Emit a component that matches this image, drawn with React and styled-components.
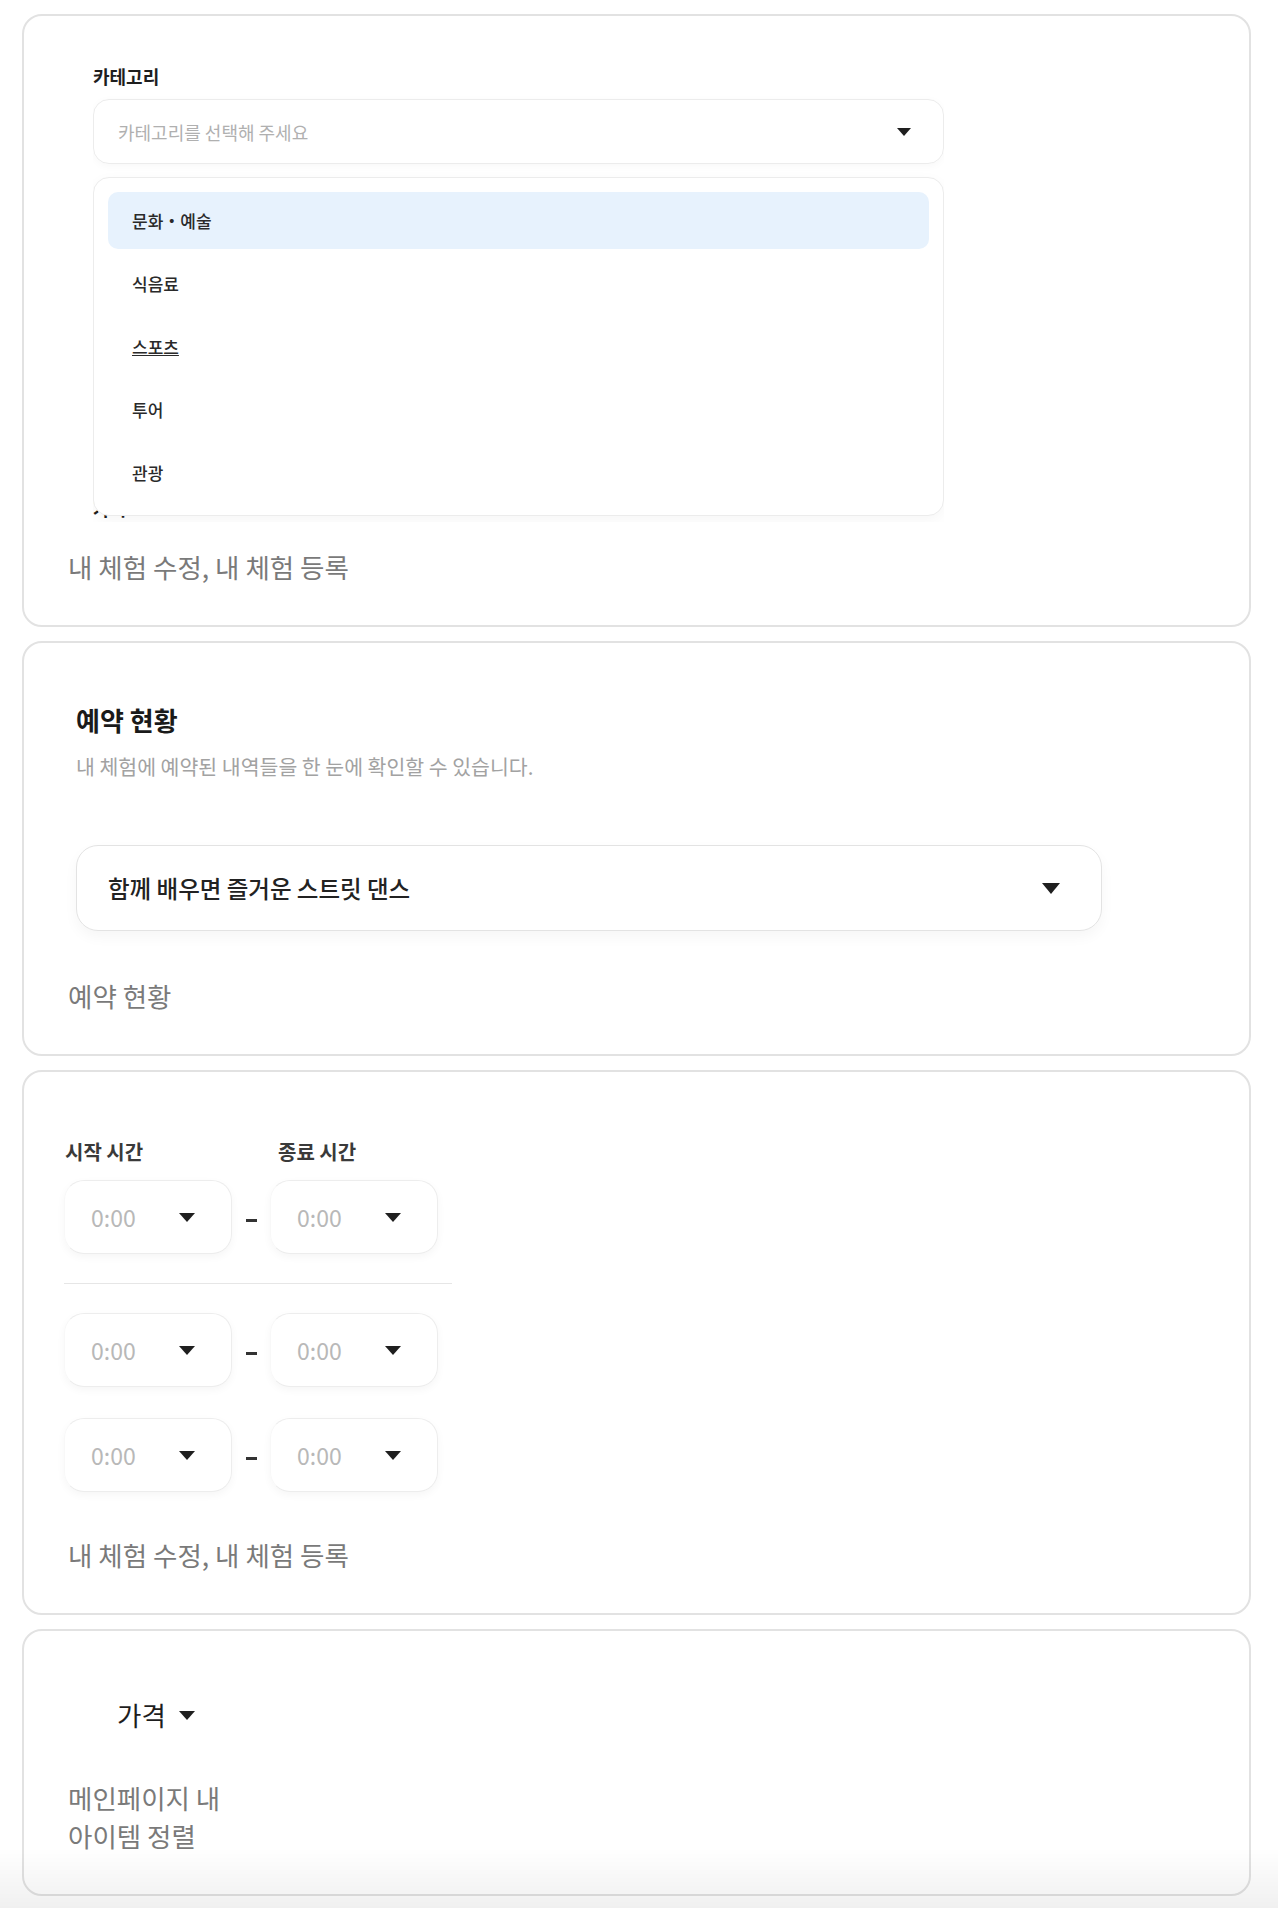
import styled, { createGlobalStyle } from "styled-components";

const GlobalStyle = createGlobalStyle`
    * {
        box-sizing: border-box;
    }

    body {
        margin: 0;
        background-color: #ffffff;
        font-family: "Noto Sans CJK KR", "Noto Sans", sans-serif;
        color: #222222;
    }
`;

const Page = styled.main`
    display: flex;
    flex-direction: column;
    gap: 14px;
    padding: 14px 27px 12px 22px;
`;

const Card = styled.section`
    display: flex;
    flex-direction: column;
    align-items: flex-start;
    padding: ${props => props.$top}px 44px 39px 44px;
    border: 2px solid #e2e2e2;
    border-radius: 20px;
    background-color: #ffffff;
`;

const Caption = styled.p`
    margin: ${props => props.$gap}px 0 0 0;
    font-size: 26.5px;
    line-height: 38px;
    color: #7a7a7a;
`;

const BottomFade = styled.div`
    position: fixed;
    left: 0;
    right: 0;
    bottom: 0;
    height: 60px;
    pointer-events: none;
    background: linear-gradient(to bottom, rgba(0, 0, 0, 0), rgba(0, 0, 0, 0.06));
`;

function Caret({ width = 14, height = 8, color = "#1f1f1f" }) {
    return (
        <svg width={width} height={height} viewBox="0 0 14 8" preserveAspectRatio="none">
            <polygon points="0,0 14,0 7,8" fill={color} />
        </svg>
    );
}

/* ---------- category form ---------- */

const FormFrame = styled.div`
    position: relative;
    width: 851px;
    height: 460px;
    margin-left: 25px;
    padding-top: 2px;
    overflow: hidden;
`;

const FieldLabel = styled.div`
    font-size: 18px;
    font-weight: 700;
    line-height: 24px;
    color: #1e1e1e;
    margin-top: ${props => props.$gap || 0}px;
`;

const CategorySelect = styled.div`
    display: flex;
    align-items: center;
    justify-content: space-between;
    height: 65px;
    margin-top: 11px;
    padding: 0 32px 0 24px;
    border: 1px solid #ececec;
    border-radius: 16px;
    box-shadow: 0 2px 8px rgba(0, 0, 0, 0.03);
    font-size: 18px;
    color: #b0b0b0;
`;

const TextArea = styled.div`
    height: 252px;
    margin-top: 12px;
    border: 1px solid #ececec;
    border-radius: 16px;
`;

const Menu = styled.ul`
    position: absolute;
    top: 115px;
    left: 0;
    right: 0;
    display: flex;
    flex-direction: column;
    gap: 6px;
    margin: 0;
    padding: 14px 14px;
    list-style: none;
    background-color: #ffffff;
    border: 1px solid #ececec;
    border-radius: 16px;
    box-shadow: 0 4px 14px rgba(0, 0, 0, 0.04);
`;

const MenuItem = styled.li`
    display: flex;
    align-items: center;
    height: 57px;
    padding-left: 24px;
    border-radius: 10px;
    font-size: 17px;
    font-weight: 500;
    color: #2a2a2a;
    background-color: ${props => (props.$active ? "#e7f2fd" : "transparent")};
    text-decoration: ${props => (props.$hover ? "underline" : "none")};
`;

const categories = ["문화・예술", "식음료", "스포츠", "투어", "관광"];

/* ---------- reservation status ---------- */

const StatusBlock = styled.div`
    display: flex;
    flex-direction: column;
    padding-left: 8px;
`;

const Heading = styled.h2`
    margin: 0;
    font-size: 26px;
    font-weight: 700;
    line-height: 32px;
    color: #1a1a1a;
`;

const SubText = styled.p`
    margin: 17px 0 0 0;
    font-size: 20.5px;
    line-height: 26px;
    color: #a2a2a2;
`;

const ExperienceSelect = styled.div`
    display: flex;
    align-items: center;
    justify-content: space-between;
    width: 1026px;
    height: 86px;
    margin-top: 66px;
    padding: 0 41px 0 31px;
    border: 1px solid #e3e3e3;
    border-radius: 22px;
    box-shadow: 0 6px 14px rgba(0, 0, 0, 0.04);
    font-size: 23.5px;
    font-weight: 500;
    color: #222222;
`;

/* ---------- time slots ---------- */

const TimeArea = styled.div`
    display: flex;
    flex-direction: column;
    margin-left: -4px;
    width: 388px;
`;

const TimeGrid = styled.div`
    display: grid;
    grid-template-columns: 168px 38px 168px;
    align-items: center;
    margin-top: ${props => props.$gap || 0}px;
`;

const TimeLabel = styled.div`
    grid-column: ${props => props.$col};
    padding-left: ${props => props.$indent}px;
    font-size: 20px;
    font-weight: 700;
    line-height: 24px;
    color: #3a3a3a;
`;

const TimeBox = styled.div`
    display: flex;
    align-items: center;
    justify-content: space-between;
    height: 74px;
    padding: 0 36px 0 26px;
    border: 1px solid #ededed;
    border-left-color: #f8f8f8;
    border-radius: 20px;
    box-shadow: 0 3px 8px rgba(0, 0, 0, 0.04);
    font-size: 23px;
    color: #b8b8b8;
`;

const Dash = styled.span`
    justify-self: center;
    width: 11px;
    height: 3px;
    margin-top: 6px;
    background-color: #333333;
`;

const Divider = styled.hr`
    width: 100%;
    margin: 29px 0 0 0;
    border: none;
    border-top: 1px solid #e6e6e6;
`;

function TimeRow({ gap }) {
    return (
        <TimeGrid $gap={gap}>
            <TimeBox>
                <span>0:00</span>
                <Caret width={16} height={9} />
            </TimeBox>
            <Dash />
            <TimeBox>
                <span>0:00</span>
                <Caret width={16} height={9} />
            </TimeBox>
        </TimeGrid>
    );
}

/* ---------- sort ---------- */

const SortButton = styled.div`
    display: flex;
    align-items: center;
    gap: 13px;
    margin-left: 49px;
    font-size: 26.5px;
    line-height: 32px;
    color: #1e1e1e;
`;

export default function App() {
    return (
        <>
            <GlobalStyle />
            <Page>
                <Card $top={46}>
                    <FormFrame>
                        <FieldLabel>카테고리</FieldLabel>
                        <CategorySelect>
                            <span>카테고리를 선택해 주세요</span>
                            <Caret width={14} height={8} />
                        </CategorySelect>
                        <FieldLabel $gap={22}>소개</FieldLabel>
                        <TextArea />
                        <FieldLabel $gap={22}>가격</FieldLabel>
                        <Menu>
                            {categories.map((item, i) => (
                                <MenuItem key={item} $active={i === 0} $hover={i === 2}>
                                    {item}
                                </MenuItem>
                            ))}
                        </Menu>
                    </FormFrame>
                    <Caption $gap={26}>내 체험 수정, 내 체험 등록</Caption>
                </Card>

                <Card $top={61}>
                    <StatusBlock>
                        <Heading>예약 현황</Heading>
                        <SubText>내 체험에 예약된 내역들을 한 눈에 확인할 수 있습니다.</SubText>
                        <ExperienceSelect>
                            <span>함께 배우면 즐거운 스트릿 댄스</span>
                            <Caret width={18} height={11} />
                        </ExperienceSelect>
                    </StatusBlock>
                    <Caption $gap={46}>예약 현황</Caption>
                </Card>

                <Card $top={68}>
                    <TimeArea>
                        <TimeGrid>
                            <TimeLabel $col={1} $indent={1}>시작 시간</TimeLabel>
                            <TimeLabel $col={3} $indent={8}>종료 시간</TimeLabel>
                        </TimeGrid>
                        <TimeRow gap={16} />
                        <Divider />
                        <TimeRow gap={29} />
                        <TimeRow gap={31} />
                    </TimeArea>
                    <Caption $gap={44}>내 체험 수정, 내 체험 등록</Caption>
                </Card>

                <Card $top={68}>
                    <SortButton>
                        <span>가격</span>
                        <Caret width={16} height={9} />
                    </SortButton>
                    <Caption $gap={48}>
                        메인페이지 내
                        <br />
                        아이템 정렬
                    </Caption>
                </Card>
            </Page>
            <BottomFade />
        </>
    );
}
